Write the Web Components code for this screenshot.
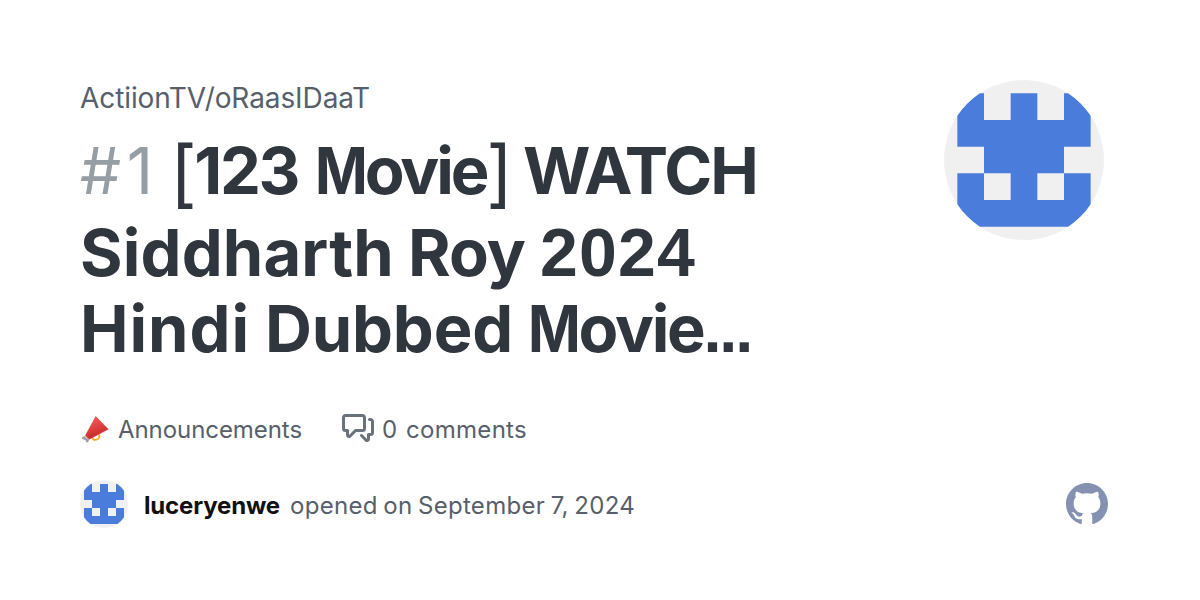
<!DOCTYPE html>
<html lang="en">
<head>
<meta charset="utf-8">
<title>Discussion card</title>
<style>
    body {
        margin: 0;
        background: #fff;
    }
</style>
</head>
<body>

<discussion-card>
    <repo-name slot="repo"><fit-text width="290">ActiionTV/oRaasIDaaT</fit-text></repo-name>
    <card-title slot="title">
        <title-line style="height: 81px">
            <fit-text class="number" width="79" gap="11">#1</fit-text>
            <fit-text width="128" gap="17"><span class="thin">[</span>123</fit-text>
            <fit-text width="195" gap="13"><span class="narrow">M</span>ovie<span class="thin">]</span></fit-text>
            <fit-text width="234">WATCH</fit-text>
        </title-line>
        <title-line style="height: 77px">
            <fit-text width="314" gap="14">Siddharth</fit-text>
            <fit-text width="117" gap="15">Roy</fit-text>
            <fit-text class="digits" width="156">2024</fit-text>
        </title-line>
        <title-line style="height: 76px">
            <fit-text width="170" gap="15">Hindi</fit-text>
            <fit-text width="248" gap="15">Dubbed</fit-text>
            <fit-text width="223"><span class="narrow">M</span>ovie<span class="dots">...</span></fit-text>
        </title-line>
    </card-title>
    <identicon-avatar slot="avatar" size="160"></identicon-avatar>
    <card-stat slot="stats">
        <megaphone-icon slot="icon"></megaphone-icon>
        <fit-text width="184" gap="1">Announcements</fit-text>
    </card-stat>
    <card-stat slot="stats">
        <comments-icon slot="icon"></comments-icon>
        <fit-text width="16" gap="8">0</fit-text>
        <fit-text width="121">comments</fit-text>
    </card-stat>
    <card-author slot="author">
        <identicon-avatar slot="avatar" size="48"></identicon-avatar>
        <fit-text slot="name" width="136" gap="1">luceryenwe</fit-text>
        <fit-text width="345" style="word-spacing: -1.5px">opened on September 7, 2024</fit-text>
    </card-author>
    <github-mark slot="brand"></github-mark>
</discussion-card>

<script>
class DiscussionCard extends HTMLElement {
    constructor() {
        super();
        this.attachShadow({ mode: "open" });
    }

    connectedCallback() {
        this.shadowRoot.innerHTML = `
            <style>
                :host {
                    display: flex;
                    flex-direction: column;
                    box-sizing: border-box;
                    width: 1200px;
                    height: 600px;
                    padding: 80px 92px 72px 80px;
                    background: #fff;
                    color: #57606a;
                    font-family: Inter, "Liberation Sans", sans-serif;
                    overflow: hidden;
                }

                .top {
                    display: flex;
                    justify-content: space-between;
                    height: 332px;
                    padding-right: 4px;
                }

                .stats {
                    display: flex;
                    align-items: center;
                    gap: 39px;
                    height: 32px;
                }

                .bottom {
                    display: flex;
                    align-items: center;
                    justify-content: space-between;
                    height: 48px;
                    margin-top: 36px;
                }
            </style>

            <div class="top">
                <div>
                    <slot name="repo"></slot>
                    <slot name="title"></slot>
                </div>
                <slot name="avatar"></slot>
            </div>
            <div class="stats"><slot name="stats"></slot></div>
            <div class="bottom">
                <slot name="author"></slot>
                <slot name="brand"></slot>
            </div>
        `;
    }
}

class RepoName extends HTMLElement {
    constructor() {
        super();
        this.attachShadow({ mode: "open" });
    }

    connectedCallback() {
        this.shadowRoot.innerHTML = `
            <style>
                :host {
                    display: block;
                    height: 52px;
                    font-size: 28px;
                    line-height: 36px;
                }
            </style>
            <slot></slot>
        `;
    }
}

class CardTitle extends HTMLElement {
    constructor() {
        super();
        this.attachShadow({ mode: "open" });
    }

    connectedCallback() {
        this.shadowRoot.innerHTML = `
            <style>
                :host {
                    display: flex;
                    flex-direction: column;
                    color: #2f363d;
                    font-size: 65px;
                    font-weight: 700;
                    line-height: 78px;
                }
            </style>
            <slot></slot>
        `;
    }
}

class TitleLine extends HTMLElement {
    constructor() {
        super();
        this.attachShadow({ mode: "open" });
    }

    connectedCallback() {
        this.shadowRoot.innerHTML = `
            <style>
                :host {
                    display: flex;
                    align-items: baseline;
                }

                ::slotted(.number) {
                    color: #959da5;
                    font-weight: 400;
                }

                ::slotted(.digits) {
                    font-family: "Liberation Sans", Arial, sans-serif;
                    font-size: 68px;
                }
            </style>
            <slot></slot>
        `;
    }
}

// Tracks its text so that it takes up exactly `width` pixels
class FitText extends HTMLElement {
    constructor() {
        super();
        this.attachShadow({ mode: "open" });
    }

    connectedCallback() {
        const gap = this.getAttribute("gap") || 0;
        this.shadowRoot.innerHTML = `
            <style>
                :host {
                    display: block;
                    flex: none;
                    margin-right: ${gap}px;
                    white-space: nowrap;
                }

                .run {
                    display: inline-block;
                }

                ::slotted(.thin) {
                    font-size: 1.13em;
                    font-weight: 400;
                    line-height: 0;
                    vertical-align: -5px;
                }

                ::slotted(.narrow) {
                    display: inline-block;
                    margin-right: -0.12em;
                    transform: scaleX(0.87);
                    transform-origin: left;
                }

                ::slotted(.dots) {
                    font-family: "Liberation Sans", Arial, sans-serif;
                    line-height: 0;
                }
            </style>
            <span class="run"><slot></slot></span>
        `;
    }

    fit() {
        const width = Number(this.getAttribute("width"));
        const run = this.shadowRoot.querySelector(".run");
        const spacing = (width - run.getBoundingClientRect().width) / this.textContent.length;
        run.style.letterSpacing = `${spacing}px`;
        this.style.width = `${width}px`;
    }
}

class IdenticonAvatar extends HTMLElement {
    constructor() {
        super();
        this.attachShadow({ mode: "open" });
    }

    connectedCallback() {
        const size = this.getAttribute("size");
        this.shadowRoot.innerHTML = `
            <style>
                :host {
                    display: block;
                    flex: none;
                    width: ${size}px;
                    height: ${size}px;
                    border-radius: 50%;
                    background: #f0f0f0;
                    overflow: hidden;
                }

                svg {
                    display: block;
                }
            </style>
            <svg width="${size}" height="${size}" viewBox="0 0 12 12">
                <path fill="#4a7ddb" d="M1 1h2v2h2V1h2v2h2V1h2v4H9v2h2v4H1V7h2V5H1zM3 7v2h2V7zM7 7v2h2V7z" fill-rule="evenodd"/>
            </svg>
        `;
    }
}

class CardStat extends HTMLElement {
    constructor() {
        super();
        this.attachShadow({ mode: "open" });
    }

    connectedCallback() {
        this.shadowRoot.innerHTML = `
            <style>
                :host {
                    display: flex;
                    align-items: center;
                    font-size: 24px;
                    line-height: 32px;
                }

                .text {
                    display: flex;
                    padding-top: 3px;
                }
            </style>
            <slot name="icon"></slot>
            <div class="text"><slot></slot></div>
        `;
    }
}

class CardAuthor extends HTMLElement {
    constructor() {
        super();
        this.attachShadow({ mode: "open" });
    }

    connectedCallback() {
        this.shadowRoot.innerHTML = `
            <style>
                :host {
                    display: flex;
                    align-items: center;
                    font-size: 24px;
                    line-height: 32px;
                }

                .text {
                    display: flex;
                    gap: 9px;
                    margin-left: 16px;
                    padding-top: 3px;
                }

                ::slotted([slot="name"]) {
                    color: #111;
                    font-weight: 700;
                }
            </style>
            <slot name="avatar"></slot>
            <div class="text">
                <slot name="name"></slot>
                <slot></slot>
            </div>
        `;
    }
}

class MegaphoneIcon extends HTMLElement {
    constructor() {
        super();
        this.attachShadow({ mode: "open" });
    }

    connectedCallback() {
        this.shadowRoot.innerHTML = `
            <style>
                :host {
                    display: block;
                    width: 38px;
                    height: 32px;
                }
            </style>
            <svg width="32" height="32" viewBox="0 0 32 32">
                <defs>
                    <linearGradient id="horn" x1="0" y1="0" x2="0.35" y2="1">
                        <stop offset="0.25" stop-color="#ef5350"/>
                        <stop offset="1" stop-color="#c62828"/>
                    </linearGradient>
                </defs>
                <path d="M12.500 25.500c.2 2 1.800 2.900 3.900 2.200c2.400-.8 3.600-2.500 2.800-5.200" fill="none" stroke="#f9a825" stroke-width="1.800"/>
                <path d="M15.800 4.600L28.200 17.200L9.300 27.200L5.500 23.400z" fill="url(#horn)" stroke="#d63a38" stroke-width=".6" stroke-linejoin="round"/>
                <path d="M4.600 23.800L9.200 27.500L8 30.500L6.200 30L5.600 28.300L2.200 26.900L2 25.400z" fill="#9e9e9e"/>
                <path d="M4.500 24.500l2.800 2.800" stroke="#c4c4c4" stroke-width="1"/>
            </svg>
        `;
    }
}

class CommentsIcon extends HTMLElement {
    constructor() {
        super();
        this.attachShadow({ mode: "open" });
    }

    connectedCallback() {
        this.shadowRoot.innerHTML = `
            <style>
                :host {
                    display: block;
                    width: 40px;
                    height: 32px;
                }
            </style>
            <svg width="32" height="32" viewBox="0 0 16 16" fill="#6a737d">
                <path d="M1.750 1h8.500c.966 0 1.750.784 1.750 1.750v5.500A1.750 1.750 0 0 1 10.250 10H7.061l-2.574 2.573A1.458 1.458 0 0 1 2 11.543V10h-.25A1.750 1.750 0 0 1 0 8.250v-5.500C0 1.784.784 1 1.750 1ZM1.500 2.750v5.500c0 .138.112.25.25.25h1a.75.75 0 0 1 .75.75v2.190l2.720-2.720a.749.749 0 0 1 .53-.22h3.500a.25.25 0 0 0 .25-.25v-5.500a.25.25 0 0 0-.25-.25h-8.500a.25.25 0 0 0-.25.25Zm13 2a.25.25 0 0 0-.25-.25h-.5a.75.75 0 0 1 0-1.500h.5c.966 0 1.750.784 1.750 1.750v5.500A1.750 1.750 0 0 1 14.250 12H14v1.543a1.458 1.458 0 0 1-2.487 1.030L9.220 12.280a.749.749 0 0 1 .326-1.275.749.749 0 0 1 .734.215l2.220 2.220v-2.190a.75.75 0 0 1 .75-.75h1a.25.25 0 0 0 .25-.25Z"/>
            </svg>
        `;
    }
}

class GithubMark extends HTMLElement {
    constructor() {
        super();
        this.attachShadow({ mode: "open" });
    }

    connectedCallback() {
        this.shadowRoot.innerHTML = `
            <style>
                :host {
                    display: block;
                    width: 42px;
                    height: 42px;
                }

                svg {
                    display: block;
                }
            </style>
            <svg width="42" height="42" viewBox="0 0 16 16" fill="#8491b3">
                <path d="M8 0C3.580 0 0 3.580 0 8c0 3.540 2.290 6.530 5.470 7.590.4.070.55-.17.55-.38 0-.19-.01-.82-.01-1.490-2.010.37-2.530-.49-2.690-.94-.09-.23-.48-.94-.82-1.130-.28-.15-.68-.52-.01-.53.63-.01 1.080.58 1.230.82.72 1.210 1.870.87 2.330.66.07-.52.28-.87.51-1.070-1.780-.2-3.640-.89-3.640-3.950 0-.87.31-1.590.82-2.150-.08-.2-.36-1.020.08-2.120 0 0 .67-.21 2.200.82.64-.18 1.320-.27 2-.27s1.360.09 2 .27c1.530-1.040 2.200-.82 2.200-.82.44 1.100.16 1.920.08 2.120.51.56.82 1.270.82 2.150 0 3.070-1.870 3.750-3.650 3.950.29.25.54.73.54 1.480 0 1.070-.01 1.930-.01 2.200 0 .21.15.46.55.38A8.010 8.010 0 0 0 16 8c0-4.420-3.580-8-8-8z"/>
            </svg>
        `;
    }
}

customElements.define("discussion-card", DiscussionCard);
customElements.define("repo-name", RepoName);
customElements.define("card-title", CardTitle);
customElements.define("title-line", TitleLine);
customElements.define("card-stat", CardStat);
customElements.define("card-author", CardAuthor);
customElements.define("identicon-avatar", IdenticonAvatar);
customElements.define("megaphone-icon", MegaphoneIcon);
customElements.define("comments-icon", CommentsIcon);
customElements.define("github-mark", GithubMark);
customElements.define("fit-text", FitText);

document.querySelectorAll("fit-text").forEach(text => text.fit());
</script>
</body>
</html>
